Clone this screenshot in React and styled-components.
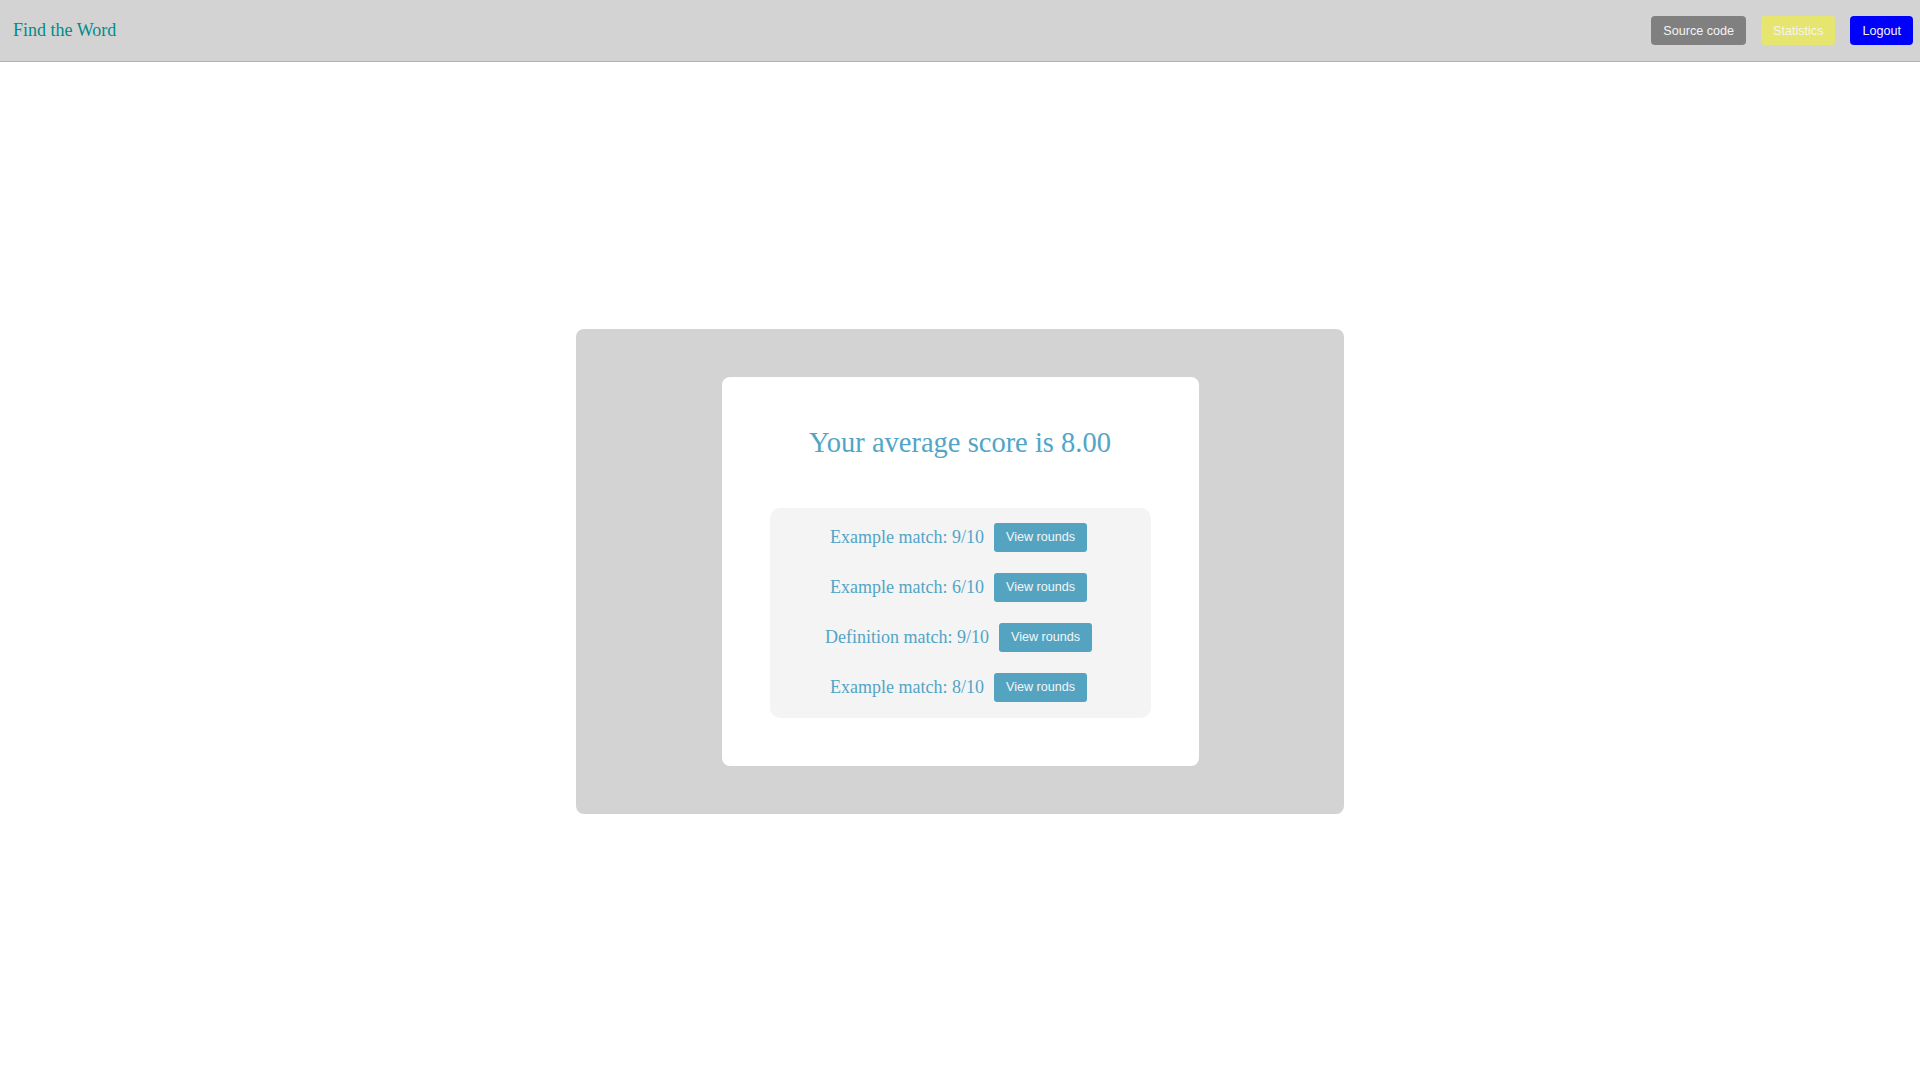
import React from "react";
import styled, { createGlobalStyle } from "styled-components";

const Global = createGlobalStyle`
  html, body { margin: 0; padding: 0; background: #ffffff; }
  body { font-family: "Liberation Serif", "Times New Roman", serif; }
  * { box-sizing: border-box; }
`;

const Header = styled.header`
  height: 62px;
  background: #d3d3d3;
  border-bottom: 1px solid #b1b1b1;
  display: flex;
  align-items: center;
  justify-content: space-between;
  padding: 0 7px 0 13px;
`;

const Title = styled.div`
  font-size: 18px;
  color: #008b8b;
`;

const Nav = styled.nav`
  display: flex;
  align-items: center;
  gap: 15px;
`;

const NavButton = styled.button`
  height: 29px;
  padding: 0 12px;
  border: none;
  border-radius: 4px;
  font-family: "Liberation Sans", Arial, sans-serif;
  font-size: 12.6px;
  color: #f4f4f4;
  background: ${(p) => p.$bg};
  cursor: pointer;
`;

const Main = styled.main`
  min-height: calc(100vh - 62px);
  display: flex;
  align-items: center;
  justify-content: center;
`;

const Panel = styled.section`
  width: 768px;
  background: #d3d3d3;
  border-radius: 8px;
  padding: 48px 0;
  display: flex;
  justify-content: center;
`;

const Card = styled.div`
  background: #ffffff;
  border-radius: 8px;
  padding: 48px;
  display: flex;
  flex-direction: column;
  align-items: center;
`;

const Heading = styled.h2`
  margin: 0 0 47px;
  font-size: 28.5px;
  line-height: 36px;
  font-weight: normal;
  color: #52a5c6;
`;

const List = styled.div`
  width: 381px;
  background: #f4f4f4;
  border-radius: 10px;
  padding: 15px 3px 16px 0;
  display: flex;
  flex-direction: column;
  align-items: center;
  gap: 21px;
`;

const Row = styled.div`
  display: flex;
  align-items: center;
  gap: 10px;
`;

const RowText = styled.span`
  font-size: 18px;
  color: #52a5c6;
`;

const RoundsButton = styled.button`
  height: 29px;
  padding: 0 12px;
  border: none;
  border-radius: 3px;
  background: #54a4c1;
  color: #f2f6f8;
  font-family: "Liberation Sans", Arial, sans-serif;
  font-size: 12.6px;
  cursor: pointer;
`;

const matches = [
  { type: "Example match", score: 9 },
  { type: "Example match", score: 6 },
  { type: "Definition match", score: 9 },
  { type: "Example match", score: 8 },
];

export default function App() {
  const avg = matches.reduce((s, m) => s + m.score, 0) / matches.length;
  return (
    <>
      <Global />
      <Header>
        <Title>Find the Word</Title>
        <Nav>
          <NavButton $bg="#808080">Source code</NavButton>
          <NavButton $bg="#e6e56f">Statistics</NavButton>
          <NavButton $bg="#0000ff">Logout</NavButton>
        </Nav>
      </Header>
      <Main>
        <Panel>
          <Card>
            <Heading>Your average score is {avg.toFixed(2)}</Heading>
            <List>
              {matches.map((m, i) => (
                <Row key={i}>
                  <RowText>
                    {m.type}: {m.score}/10
                  </RowText>
                  <RoundsButton>View rounds</RoundsButton>
                </Row>
              ))}
            </List>
          </Card>
        </Panel>
      </Main>
    </>
  );
}
